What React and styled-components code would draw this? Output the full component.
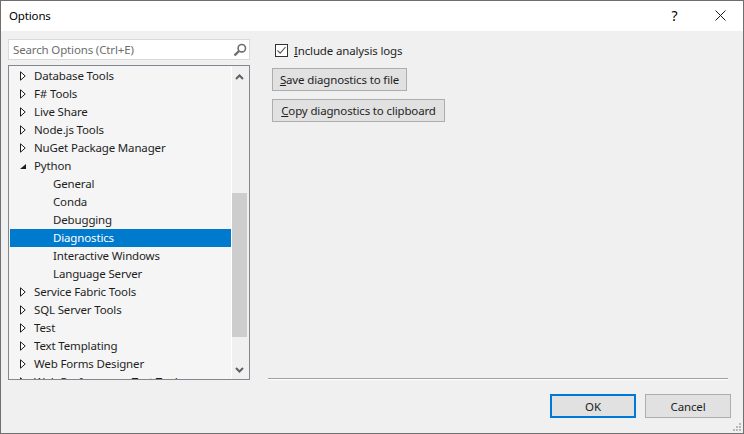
import styled, { createGlobalStyle } from 'styled-components'

const Global = createGlobalStyle`
  html, body { margin: 0; padding: 0; background: #f0f0f0; }
  * { box-sizing: border-box; }
`

const Dialog = styled.div`
  width: 744px;
  height: 434px;
  display: flex;
  flex-direction: column;
  position: relative;
  overflow: hidden;
  background: #f0f0f0;
  border: 1px solid #6f6f6f;
  font-family: "Noto Sans", "Open Sans", sans-serif;
  font-size: 11.5px;
  letter-spacing: -0.15px;
  color: #1e1e1e;
`

const TitleBar = styled.div`
  height: 30px;
  flex: none;
  background: #fff;
  display: flex;
  align-items: center;
  padding: 0 0 2px 8px;
  color: #000;
`

const TitleText = styled.span`
  flex: 1;
`

const TitleButton = styled.div`
  width: 45px;
  height: 28px;
  display: flex;
  align-items: center;
  justify-content: center;
  font-size: 14px;
  padding-right: ${p => (p.$help ? '2px' : '0')};
`

const Body = styled.div`
  flex: 1;
  display: flex;
  min-height: 0;
`

const LeftColumn = styled.div`
  width: 250px;
  flex: none;
  padding: 8px 0 0 7px;
`

const SearchBox = styled.div`
  width: 242px;
  height: 21px;
  background: #fff;
  border: 1px solid #d9d9d9;
  display: flex;
  align-items: center;
  justify-content: space-between;
  padding: 0 2px 0 4px;
  color: #6d6d6d;
`

const Tree = styled.div`
  width: 242px;
  height: 315px;
  margin-top: 5px;
  border: 1px solid #828790;
  background: #f5f5f5;
  display: flex;
  overflow: hidden;
`

const TreeList = styled.div`
  flex: 1;
  padding: 1px 0 0 1px;
  overflow: hidden;
`

const Row = styled.div`
  height: 18px;
  display: flex;
  align-items: center;
  white-space: nowrap;
  padding-left: ${p => (p.$child ? '43px' : '10px')};
  padding-bottom: 2px;
  background: ${p => (p.$selected ? '#007acc' : 'transparent')};
  color: ${p => (p.$selected ? '#fff' : '#1e1e1e')};
`

const Caret = styled.svg`
  width: 6px;
  height: 10px;
  margin: 2px 8px 0 0;
  flex: none;
`

const Scrollbar = styled.div`
  width: 18px;
  flex: none;
  background: #f0f0f0;
  border-left: 1px solid #fff;
  display: flex;
  flex-direction: column;
  padding: 2px 2px 1px 0;
`

const ScrollArrow = styled.div`
  height: 17px;
  flex: none;
  display: flex;
  align-items: center;
  justify-content: center;
`

const ScrollTrack = styled.div`
  flex: 1;
  padding: 108px 0 24px;
  display: flex;
`

const ScrollThumb = styled.div`
  flex: 1;
  background: #cdcdcd;
`

const RightColumn = styled.div`
  flex: 1;
  display: flex;
  flex-direction: column;
  padding: 12px 15px 0 17px;
`

const CheckRow = styled.label`
  display: flex;
  align-items: center;
  height: 15px;
  margin-left: 7px;
  gap: 6px;
`

const CheckBox = styled.span`
  width: 13px;
  height: 13px;
  background: #fff;
  border: 1px solid #333;
  display: flex;
  align-items: center;
  justify-content: center;
`

const ActionButton = styled.button`
  display: block;
  height: ${p => p.$h}px;
  width: ${p => p.$w}px;
  margin: 0 0 8px 4px;
  padding: 0;
  background: #e1e1e1;
  border: 1px solid #adadad;
  font: inherit;
  letter-spacing: inherit;
  color: #1e1e1e;
`

const Actions = styled.div`
  margin-top: 10px;
  flex: 1;
`

const Separator = styled.div`
  height: 2px;
  border-top: 1px solid #a0a0a0;
  border-bottom: 1px solid #fff;
`

const Footer = styled.div`
  height: 53px;
  flex: none;
  display: flex;
  justify-content: flex-end;
  gap: 9px;
  padding: 14px 12px 0 0;
  margin-right: -15px;
`

const FooterButton = styled.button`
  width: 86px;
  height: 24px;
  padding: 0;
  background: #e1e1e1;
  border: ${p => (p.$primary ? '2px solid #0078d7' : '1px solid #adadad')};
  font: inherit;
  letter-spacing: inherit;
  color: #1e1e1e;
`

const Grip = styled.svg`
  position: absolute;
  right: 1px;
  bottom: 1px;
  width: 11px;
  height: 11px;
`

const before = ['Database Tools', 'F# Tools', 'Live Share', 'Node.js Tools', 'NuGet Package Manager']
const children = ['General', 'Conda', 'Debugging', 'Diagnostics', 'Interactive Windows', 'Language Server']
const after = ['Service Fabric Tools', 'SQL Server Tools', 'Test', 'Text Templating', 'Web Forms Designer', 'Web Performance Test Tools']

function Collapsed() {
  return (
    <Caret viewBox="0 0 6 10">
      <path d="M0.5 0.8 L5.2 5 L0.5 9.2 Z" fill="#fff" stroke="#1e1e1e" strokeWidth="1" />
    </Caret>
  )
}

function Expanded() {
  return (
    <Caret viewBox="0 0 6 10">
      <path d="M0 8 L6 8 L6 3 Z" fill="#1e1e1e" />
    </Caret>
  )
}

function Chevron({ down }) {
  return (
    <svg width="9" height="6" viewBox="0 0 9 6">
      <path d={down ? 'M1 1 L4.5 4.5 L8 1' : 'M1 5 L4.5 1.5 L8 5'} fill="none" stroke="#606060" strokeWidth="2" />
    </svg>
  )
}

export default function App() {
  return (
    <>
      <Global />
      <Dialog>
        <TitleBar>
          <TitleText>Options</TitleText>
          <TitleButton $help>?</TitleButton>
          <TitleButton>
            <svg width="11" height="11" viewBox="0 0 11 11">
              <path d="M0.5 0.5 L10.5 10.5 M10.5 0.5 L0.5 10.5" stroke="#1a1a1a" strokeWidth="1" />
            </svg>
          </TitleButton>
        </TitleBar>
        <Body>
          <LeftColumn>
            <SearchBox>
              <span>Search Options (Ctrl+E)</span>
              <svg width="14" height="14" viewBox="0 0 14 14">
                <circle cx="8.8" cy="5.2" r="3.7" fill="none" stroke="#6e6e6e" strokeWidth="1.6" />
                <path d="M6 8 L1.5 12.5" stroke="#6e6e6e" strokeWidth="2.4" />
              </svg>
            </SearchBox>
            <Tree>
              <TreeList>
                {before.map(name => (
                  <Row key={name}><Collapsed />{name}</Row>
                ))}
                <Row><Expanded />Python</Row>
                {children.map(name => (
                  <Row key={name} $child $selected={name === 'Diagnostics'}>{name}</Row>
                ))}
                {after.map(name => (
                  <Row key={name}><Collapsed />{name}</Row>
                ))}
              </TreeList>
              <Scrollbar>
                <ScrollArrow><Chevron /></ScrollArrow>
                <ScrollTrack><ScrollThumb /></ScrollTrack>
                <ScrollArrow><Chevron down /></ScrollArrow>
              </Scrollbar>
            </Tree>
          </LeftColumn>
          <RightColumn>
            <CheckRow>
              <CheckBox>
                <svg width="11" height="11" viewBox="0 0 11 11">
                  <path d="M1.5 5.5 L4.2 8.2 L9.5 2" fill="none" stroke="#555" strokeWidth="1.1" />
                </svg>
              </CheckBox>
              <span><u>I</u>nclude analysis logs</span>
            </CheckRow>
            <Actions>
              <ActionButton $w={135} $h={23}><u>S</u>ave diagnostics to file</ActionButton>
              <ActionButton $w={173} $h={23}><u>C</u>opy diagnostics to clipboard</ActionButton>
            </Actions>
            <Separator />
            <Footer>
              <FooterButton $primary>OK</FooterButton>
              <FooterButton>Cancel</FooterButton>
            </Footer>
          </RightColumn>
        </Body>
        <Grip viewBox="0 0 11 11">
          <path d="M8 2h2v2H8zM5 5h2v2H5zM8 5h2v2H8zM2 8h2v2H2zM5 8h2v2H5zM8 8h2v2H8z" fill="#b8b8b8" />
        </Grip>
      </Dialog>
    </>
  )
}
